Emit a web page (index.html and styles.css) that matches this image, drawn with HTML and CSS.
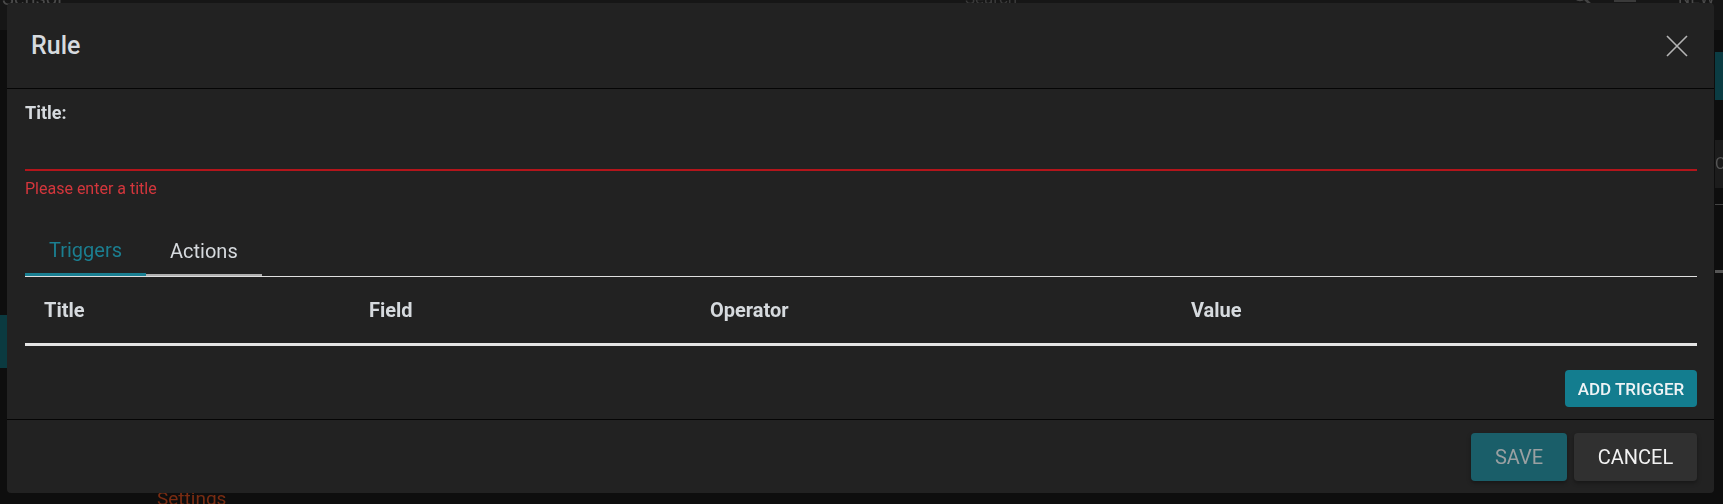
FILE: index.html
```html
<!DOCTYPE html>
<html lang="en">
<head>
<meta charset="utf-8">
<title>Rule</title>
<link rel="stylesheet" href="styles.css">
</head>
<body>
<div class="backdrop">
  <div class="bg-topbar">
    <span class="bg-brand">Sensor</span>
    <span class="bg-search">Search</span>
    <svg class="bg-mag" width="20" height="20" viewBox="0 0 20 20"><circle cx="8" cy="8" r="6" stroke="#444" stroke-width="2.5" fill="none"/><path d="M12.5 12.5 L18 18" stroke="#444" stroke-width="2.5"/></svg>
    <span class="bg-icon"></span>
    <span class="bg-new">NEW</span>
  </div>
  <div class="bg-teal-right"></div>
  <div class="bg-card-right">C</div>
  <div class="bg-line-right"></div>
  <div class="bg-line-right2"></div>
  <div class="bg-teal-left"></div>
  <div class="bg-settings">Settings</div>
</div>

<div class="modal">
  <header class="modal-header">
    <h2 class="modal-title">Rule</h2>
    <button class="close-btn" aria-label="Close">
      <svg width="22" height="22" viewBox="0 0 22 22"><path d="M1 1 L21 21 M21 1 L1 21" stroke="#b5b5b5" stroke-width="1.6" fill="none"/></svg>
    </button>
  </header>

  <div class="modal-body">
    <label class="field-label">Title:</label>
    <div class="text-input"></div>
    <div class="error-text">Please enter a title</div>

    <div class="tabs">
      <div class="tab active">Triggers</div>
      <div class="tab second">Actions</div>
    </div>

    <div class="table-head">
      <div class="th col-title">Title</div>
      <div class="th col-field">Field</div>
      <div class="th col-op">Operator</div>
      <div class="th col-value">Value</div>
    </div>

    <div class="add-row">
      <button class="btn-add">ADD TRIGGER</button>
    </div>
  </div>

  <footer class="modal-footer">
    <button class="btn-save">SAVE</button>
    <button class="btn-cancel">CANCEL</button>
  </footer>
</div>
</body>
</html>
```

FILE: styles.css
```css
* { box-sizing: border-box; }

html, body {
  margin: 0;
  padding: 0;
  height: 100%;
  overflow: hidden;
}

body {
  background: #0e0e0e;
  font-family: Roboto, "Noto Sans", sans-serif;
  padding: 3px 8px 0 7px;
}

/* dimmed page underneath */
.backdrop {
  position: fixed;
  inset: 0;
  z-index: 0;
}
.bg-topbar {
  height: 30px;
  background: #161616;
  position: relative;
}
.bg-brand {
  position: absolute;
  left: 2px;
  top: -14px;
  font-size: 20px;
  color: #4a4a4a;
}
.bg-search {
  position: absolute;
  left: 965px;
  top: -12px;
  font-size: 17px;
  color: #3a3a3a;
}
.bg-mag {
  position: absolute;
  left: 1572px;
  top: -14px;
}
.bg-icon {
  position: absolute;
  left: 1614px;
  top: -6px;
  width: 22px;
  height: 8px;
  background: #3a3a3a;
}
.bg-new {
  position: absolute;
  left: 1678px;
  top: -12px;
  font-size: 17px;
  color: #4a4a4a;
}
.bg-teal-right {
  position: absolute;
  left: 1715px;
  top: 52px;
  width: 8px;
  height: 48px;
  background: #0b3c43;
}
.bg-card-right {
  position: absolute;
  left: 1715px;
  top: 140px;
  width: 8px;
  height: 48px;
  background: #1c1c1c;
  color: #555;
  font-size: 16px;
  line-height: 48px;
  overflow: hidden;
}
.bg-line-right {
  position: absolute;
  left: 1715px;
  top: 204px;
  width: 8px;
  height: 1px;
  background: #444;
}
.bg-line-right2 {
  position: absolute;
  left: 1715px;
  top: 270px;
  width: 8px;
  height: 3px;
  background: #555;
}
.bg-teal-left {
  position: absolute;
  left: 0;
  top: 315px;
  width: 7px;
  height: 53px;
  background: #0b3a40;
}
.bg-settings {
  position: absolute;
  left: 157px;
  top: 487px;
  font-size: 19px;
  color: #7a2c12;
}

/* modal */
.modal {
  position: relative;
  z-index: 1;
  width: 1707px;
  height: 490px;
  background: #222222;
  border-radius: 4px;
  display: flex;
  flex-direction: column;
  color: #d6dade;
}

.modal-header {
  height: 86px;
  flex: none;
  display: flex;
  align-items: center;
  justify-content: space-between;
  padding: 0 26px 0 24px;
  border-bottom: 1px solid #050505;
}
.modal-title {
  margin: 0;
  font-size: 25px;
  font-weight: 500;
  color: #d6dade;
}
.close-btn {
  background: none;
  border: 0;
  padding: 0;
  width: 22px;
  height: 22px;
  display: flex;
  cursor: pointer;
}

.modal-body {
  flex: 1;
  padding: 13px 17px 0 18px;
  display: flex;
  flex-direction: column;
}

.field-label {
  font-size: 18px;
  font-weight: 700;
  line-height: 21px;
  color: #d6dade;
}
.text-input {
  height: 48px;
  border-bottom: 2px solid #b3151b;
}
.error-text {
  margin-top: 8px;
  font-size: 16px;
  line-height: 19px;
  color: #d4363c;
}

.tabs {
  margin-top: 30px;
  display: flex;
  border-bottom: 1px solid #e0e0e0;
}
.tab {
  height: 48px;
  line-height: 45px;
  font-size: 20px;
  padding: 0 24px;
  color: #d6dade;
}
.tab.active {
  color: #1b7e90;
  border-bottom: 3px solid #1a7f92;
}
.tab.second {
  border-bottom: 2px solid #b0b0b0;
  line-height: 46px;
}

.table-head {
  display: flex;
  height: 69px;
  align-items: center;
  border-bottom: 3px solid #e4e4e4;
}
.th {
  font-size: 20px;
  font-weight: 700;
  color: #d6dade;
  padding-left: 19px;
}
.col-title { width: 325px; }
.col-field { width: 341px; }
.col-op { width: 481px; }
.col-value { flex: 1; }

.add-row {
  display: flex;
  justify-content: flex-end;
  margin-top: 24px;
}
.btn-add {
  height: 37px;
  width: 132px;
  border: 0;
  border-radius: 4px;
  background: #137d8f;
  color: #eef3f5;
  font-family: Roboto, sans-serif;
  font-size: 17px;
  font-weight: 500;
  padding: 0;
}

.modal-footer {
  height: 74px;
  flex: none;
  border-top: 1px solid #050505;
  display: flex;
  align-items: center;
  justify-content: flex-end;
  gap: 7px;
  padding: 0 17px 0 0;
}
.btn-save,
.btn-cancel {
  height: 48px;
  border: 0;
  border-radius: 4px;
  font-family: Roboto, sans-serif;
  font-size: 20px;
  padding: 0;
  box-shadow: 0 2px 4px rgba(0, 0, 0, 0.35);
}
.btn-save {
  width: 96px;
  background: #1a5e69;
  color: #9aa0a2;
}
.btn-cancel {
  width: 123px;
  background: #303030;
  color: #f2f2f2;
}
```
